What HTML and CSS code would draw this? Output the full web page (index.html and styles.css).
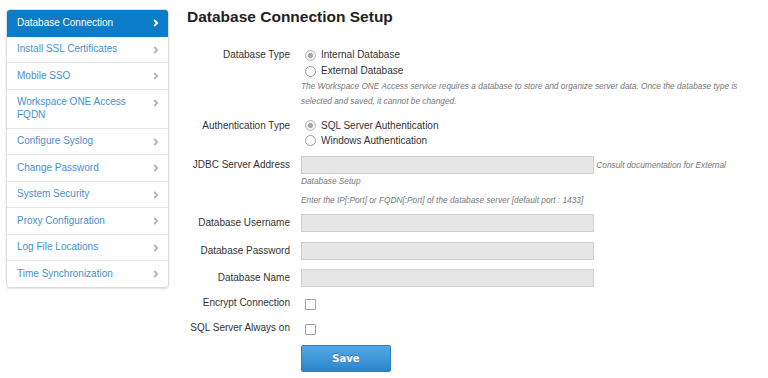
FILE: index.html
```html
<!DOCTYPE html>
<html>
<head>
<meta charset="utf-8">
<link rel="stylesheet" href="styles.css">
</head>
<body>
<nav class="sidebar">
  <a class="nav-item active"><span>Database Connection</span><svg class="chev" viewBox="0 0 6 8"><path d="M1.2 1 L4.2 4 L1.2 7"/></svg></a>
  <a class="nav-item"><span>Install SSL Certificates</span><svg class="chev" viewBox="0 0 6 8"><path d="M1.2 1 L4.2 4 L1.2 7"/></svg></a>
  <a class="nav-item"><span>Mobile SSO</span><svg class="chev" viewBox="0 0 6 8"><path d="M1.2 1 L4.2 4 L1.2 7"/></svg></a>
  <a class="nav-item"><span>Workspace ONE Access<br>FQDN</span><svg class="chev" viewBox="0 0 6 8"><path d="M1.2 1 L4.2 4 L1.2 7"/></svg></a>
  <a class="nav-item"><span>Configure Syslog</span><svg class="chev" viewBox="0 0 6 8"><path d="M1.2 1 L4.2 4 L1.2 7"/></svg></a>
  <a class="nav-item"><span>Change Password</span><svg class="chev" viewBox="0 0 6 8"><path d="M1.2 1 L4.2 4 L1.2 7"/></svg></a>
  <a class="nav-item"><span>System Security</span><svg class="chev" viewBox="0 0 6 8"><path d="M1.2 1 L4.2 4 L1.2 7"/></svg></a>
  <a class="nav-item"><span>Proxy Configuration</span><svg class="chev" viewBox="0 0 6 8"><path d="M1.2 1 L4.2 4 L1.2 7"/></svg></a>
  <a class="nav-item"><span>Log File Locations</span><svg class="chev" viewBox="0 0 6 8"><path d="M1.2 1 L4.2 4 L1.2 7"/></svg></a>
  <a class="nav-item last"><span>Time Synchronization</span><svg class="chev" viewBox="0 0 6 8"><path d="M1.2 1 L4.2 4 L1.2 7"/></svg></a>
</nav>
<main class="main">
  <h1 class="title">Database Connection Setup</h1>
  <div class="form">
    <div class="row row-dbtype">
      <div class="label l16">Database Type</div>
      <div class="content">
        <div class="opt l16"><span class="radio checked"></span>Internal Database</div>
        <div class="opt l16"><span class="radio"></span>External Database</div>
        <p class="help">The Workspace ONE Access service requires a database to store and organize server data. Once the database type is selected and saved, it cannot be changed.</p>
      </div>
    </div>
    <div class="row row-auth">
      <div class="label l15">Authentication Type</div>
      <div class="content">
        <div class="opt l15"><span class="radio checked"></span>SQL Server Authentication</div>
        <div class="opt l15"><span class="radio"></span>Windows Authentication</div>
      </div>
    </div>
    <div class="row row-jdbc">
      <div class="label l18">JDBC Server Address</div>
      <div class="content">
        <div class="inline-help"><span class="input"></span> <span class="help-inline">Consult documentation for External Database Setup</span></div>
        <p class="help help-enter">Enter the IP[:Port] or FQDN[:Port] of the database server [default port : 1433]</p>
      </div>
    </div>
    <div class="row row-user">
      <div class="label l18">Database Username</div>
      <div class="content"><span class="input"></span></div>
    </div>
    <div class="row row-pass">
      <div class="label l18">Database Password</div>
      <div class="content"><span class="input"></span></div>
    </div>
    <div class="row row-name">
      <div class="label l18">Database Name</div>
      <div class="content"><span class="input"></span></div>
    </div>
    <div class="row row-encrypt">
      <div class="label l14">Encrypt Connection</div>
      <div class="content check-cell"><span class="checkbox"></span></div>
    </div>
    <div class="row row-always">
      <div class="label l14">SQL Server Always on</div>
      <div class="content check-cell"><span class="checkbox"></span></div>
    </div>
    <div class="row row-save">
      <div class="label"></div>
      <div class="content"><button class="save">Save</button></div>
    </div>
  </div>
</main>
</body>
</html>
```

FILE: styles.css
```css
html, body {
  margin: 0;
  padding: 0;
  background: #ffffff;
}
body {
  display: flex;
  align-items: flex-start;
  padding-left: 6px;
  font-family: "Liberation Sans", Arial, sans-serif;
  color: #333;
}
.sidebar {
  margin-top: 9px;
  width: 163px;
  box-sizing: border-box;
  border: 1px solid #dcdcdc;
  border-radius: 4px;
  box-shadow: 0 1px 2px rgba(0,0,0,0.12);
  overflow: hidden;
  display: flex;
  flex-direction: column;
}
.nav-item {
  display: flex;
  align-items: center;
  justify-content: space-between;
  padding: 6.5px 9px 6.5px 10px;
  font-size: 10px;
  line-height: 12.5px;
  color: #4690cf;
  border-bottom: 1px solid #e6e6e6;
}
.nav-item.last {
  border-bottom: none;
}
.nav-item.active {
  background: #0b7dc8;
  color: #ffffff;
  margin: -1px -1px 0 -1px;
  padding-left: 11px;
  padding-right: 10px;
  padding-top: 7.5px;
  border-bottom: 1px solid #0b7dc8;
}
.chev {
  width: 6px;
  height: 8px;
  flex: none;
  align-self: flex-start;
  margin-top: 2.5px;
}
.chev path {
  fill: none;
  stroke: #b3b3b3;
  stroke-width: 1.8;
}
.active .chev path {
  stroke: #ffffff;
}
.main {
  margin-left: 18px;
  padding-top: 8px;
  flex: 1;
}
.title {
  margin: 0 0 21px 0;
  font-size: 15.5px;
  line-height: 18px;
  font-weight: bold;
  color: #222;
}
.form {
  display: flex;
  flex-direction: column;
}
.row {
  display: flex;
  align-items: flex-start;
}
.label {
  width: 103px;
  flex: none;
  text-align: right;
  font-size: 10px;
  color: #333;
  white-space: nowrap;
}
.content {
  margin-left: 11px;
  width: 452px;
}
.l14 { line-height: 14px; }
.l15 { line-height: 15px; }
.l16 { line-height: 16px; }
.l18 { line-height: 18px; }
.opt {
  display: flex;
  align-items: center;
  font-size: 10px;
  color: #333;
}
.radio {
  width: 9px;
  height: 9px;
  border: 1px solid #9a9a9a;
  border-radius: 50%;
  margin: 0 5px 0 4px;
  box-sizing: content-box;
  background: #fff;
}
.radio.checked {
  border-color: #b5b5b5;
  background: radial-gradient(circle, #a8a8a8 0 2.3px, #f2f2f2 2.8px);
}
.help {
  margin: 0;
  font-size: 8.3px;
  line-height: 15px;
  font-style: italic;
  color: #777;
}
.row-auth { margin-top: 9px; }
.row-jdbc { margin-top: 8px; }
.inline-help {
  font-size: 8.3px;
  line-height: 15px;
}
.input {
  display: inline-block;
  vertical-align: middle;
  width: 293px;
  height: 18px;
  box-sizing: border-box;
  background: #e6e6e6;
  border: 1px solid #cfcfcf;
}
.content > .input { display: block; }
.help-inline {
  font-style: italic;
  color: #777;
  font-size: 8.3px;
  vertical-align: middle;
}
.help-enter { margin-top: 4px; }
.row-user { margin-top: 6px; }
.row-pass { margin-top: 10px; }
.row-name { margin-top: 9px; }
.row-encrypt { margin-top: 9px; }
.row-always { margin-top: 11px; }
.check-cell {
  height: 14px;
  display: flex;
  align-items: center;
}
.checkbox {
  width: 9px;
  height: 9px;
  margin-left: 4px;
  margin-top: 3px;
  border: 1px solid #a0a0a0;
  border-radius: 1px;
  background: #fff;
}
.row-save { margin-top: 10px; }
.save {
  width: 90px;
  height: 27px;
  border: 1px solid #2f7fbf;
  border-radius: 2px;
  background: linear-gradient(#52a8e4, #2c86cd);
  color: #fff;
  font-family: "DejaVu Sans", Verdana, sans-serif;
  font-weight: bold;
  font-size: 10px;
  text-shadow: 0 -1px 0 rgba(0,0,0,0.25);
  box-shadow: 0 1px 1px rgba(0,0,0,0.15);
  padding: 0;
}
```
